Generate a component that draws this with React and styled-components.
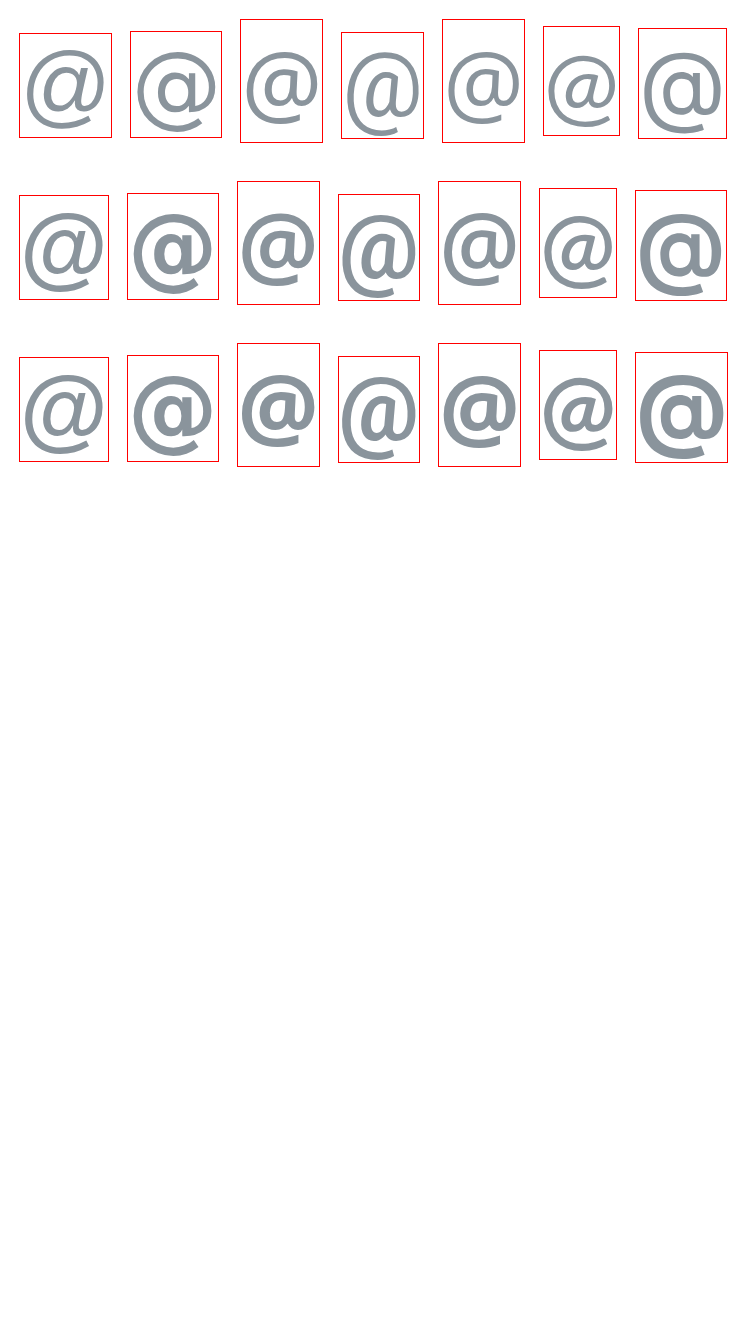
import React from "react";
import styled, { createGlobalStyle } from "styled-components";

const GlobalStyle = createGlobalStyle`
  body { margin: 0; background: #fff; }
`;

const Row = styled.div`
  display: flex;
  gap: 20px;
  padding: 20px;
  align-items: baseline;
`;

const Glyph = styled.span`
  font-family: ${(p) => p.$f};
  font-weight: ${(p) => p.$w};
  font-size: 90px;
  color: #8a949c;
  outline: 1px solid red;
`;

const fonts = ["Liberation Sans", "DejaVu Sans", "Noto Sans", "Roboto", "Open Sans", "Lato", "Inter"];

export default function App() {
  return (
    <div>
      <GlobalStyle />
      {[400, 600, 700].map((w) => (
        <Row key={w}>
          {fonts.map((f) => (
            <Glyph key={f} $f={`"${f}"`} $w={w}>@</Glyph>
          ))}
        </Row>
      ))}
    </div>
  );
}
